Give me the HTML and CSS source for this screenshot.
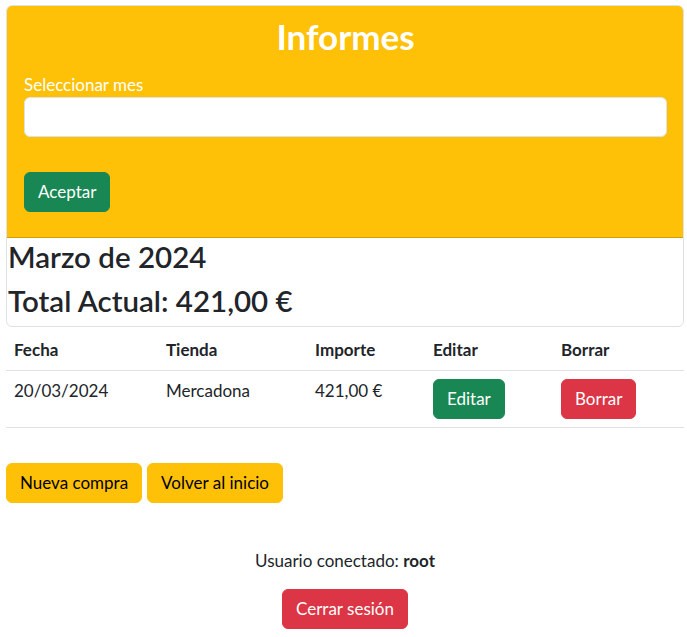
FILE: index.html
```html
<!DOCTYPE html>
<html lang="es">
<head>
<meta charset="utf-8">
<title>Informes</title>
<link rel="stylesheet" href="styles.css">
</head>
<body>
<div class="page">
  <div class="card">
    <div class="card-header">
      <h1 class="title">Informes</h1>
      <label class="form-label" for="mes">Seleccionar mes</label>
      <input id="mes" class="form-control" type="text">
      <button class="btn btn-success btn-accept">Aceptar</button>
    </div>
    <h2 class="summary">Marzo de 2024</h2>
    <h2 class="summary">Total Actual: 421,00 €</h2>
  </div>

  <table class="table">
    <colgroup>
      <col class="c1"><col class="c2"><col class="c3"><col class="c4"><col class="c5">
    </colgroup>
    <thead>
      <tr><th>Fecha</th><th>Tienda</th><th>Importe</th><th>Editar</th><th>Borrar</th></tr>
    </thead>
    <tbody>
      <tr>
        <td>20/03/2024</td>
        <td>Mercadona</td>
        <td>421,00 €</td>
        <td><button class="btn btn-success">Editar</button></td>
        <td><button class="btn btn-danger">Borrar</button></td>
      </tr>
    </tbody>
  </table>

  <div class="actions">
    <button class="btn btn-warning">Nueva compra</button>
    <button class="btn btn-warning">Volver al inicio</button>
  </div>

  <div class="session">
    <p class="user">Usuario conectado: <b>root</b></p>
    <button class="btn btn-danger">Cerrar sesión</button>
  </div>
</div>
</body>
</html>
```

FILE: styles.css
```css
* { box-sizing: border-box; }

body {
  margin: 0;
  font-family: Lato, "Noto Sans", sans-serif;
  font-size: 17px;
  line-height: 24px;
  color: #212529;
  background: #fff;
}

.page {
  padding: 5px 3px 0 6px;
}

.card {
  border: 1px solid #dee2e6;
  border-radius: 6px;
  overflow: hidden;
}

.card-header {
  background: #ffc107;
  padding: 8px 16px 25px 17px;
  border-bottom: 1px solid rgba(0,0,0,.175);
}

.title {
  margin: 0;
  text-align: center;
  color: #fff;
  font-size: 35px;
  line-height: 44px;
  font-weight: 700;
}

.form-label {
  display: block;
  margin-top: 15px;
  color: #fff;
  line-height: 24px;
}

.form-control {
  display: block;
  width: 100%;
  height: 40px;
  border: 1px solid #dee2e6;
  border-radius: 6px;
  background: #fff;
  font: inherit;
  padding: 6px 12px;
}

.btn {
  display: inline-block;
  height: 40px;
  padding: 7px 13px;
  font: inherit;
  line-height: 24px;
  border: 1px solid transparent;
  border-radius: 6px;
  cursor: pointer;
}

.btn-success { background: #198754; border-color: #198754; color: #fff; }
.btn-danger { background: #dc3545; border-color: #dc3545; color: #fff; }
.btn-warning { background: #ffc107; border-color: #ffc107; color: #000; }

.btn-accept {
  display: block;
  margin-top: 35px;
}

.summary {
  margin: 0 0 6px 1px;
  font-size: 29.5px;
  line-height: 38px;
  font-weight: 600;
}

.table {
  width: 100%;
  margin-top: 3px;
  border-collapse: collapse;
  table-layout: fixed;
}

.c1 { width: 152px; }
.c2 { width: 149px; }
.c3 { width: 118px; }
.c4 { width: 128px; }

.table th,
.table td {
  padding: 8px;
  text-align: left;
  vertical-align: top;
  border-bottom: 1px solid #dee2e6;
}

.table th { font-weight: 700; }

.actions {
  margin-top: 35px;
  display: flex;
  gap: 5px;
}

.session {
  margin-top: 46px;
  display: flex;
  flex-direction: column;
  align-items: center;
}

.user {
  margin: 0 0 16px;
}
```
